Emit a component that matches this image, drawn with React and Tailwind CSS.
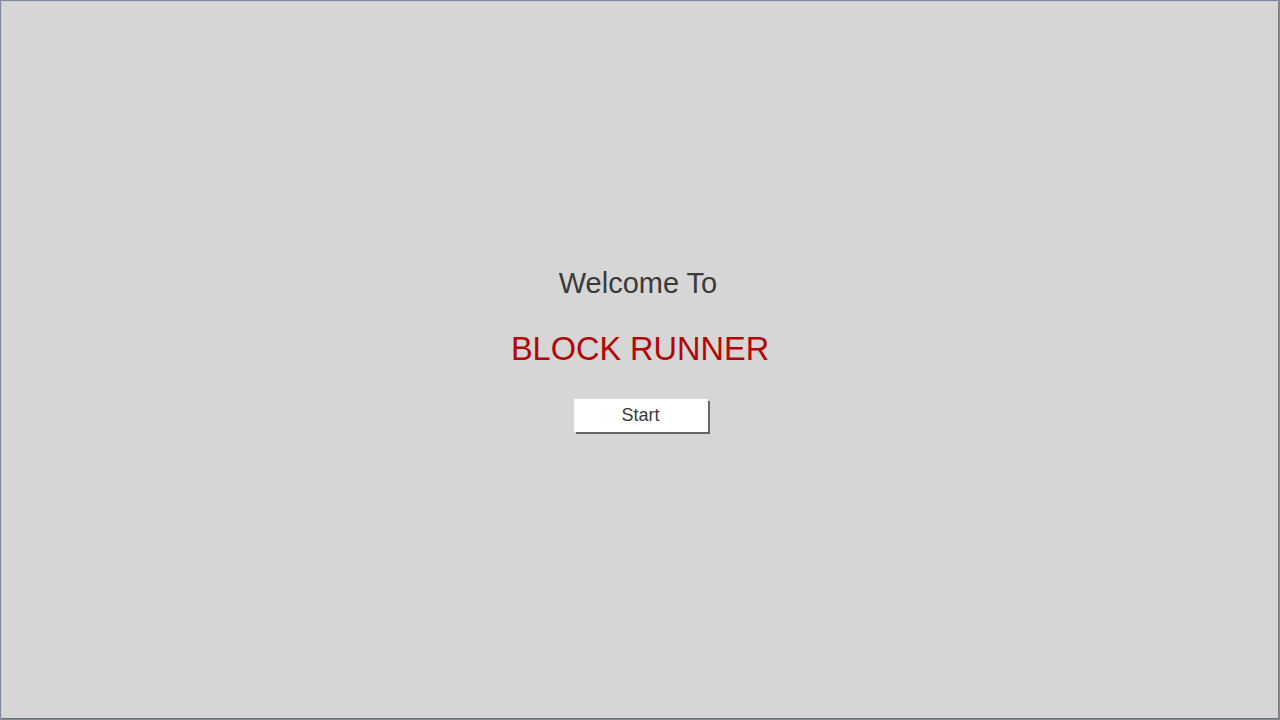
export default function App() {
  return (
    <div className="h-screen w-screen bg-[#7f889c] p-[1px]" style={{ fontFamily: '"Liberation Sans", Arial, sans-serif' }}>
      <div className="h-full w-full border-t border-l border-[#c9ccd3] border-r-[#7a7a7a] border-b-[#6e6e6e] border-r border-b bg-[#d6d6d6]">
        <div className="flex flex-col items-center pt-[267px]">
          <h2 className="mr-[4px] text-[29px] leading-none text-[#3a3a3a]">Welcome To</h2>
          <h1 className="mt-[35px] text-[32.5px] leading-none text-[#b30606]">BLOCK RUNNER</h1>
          <button className="mt-[33px] ml-[1px] h-[33px] w-[134px] bg-white text-[18px] text-[#3a3a3a] shadow-[2px_2px_0_0_#666666]">
            Start
          </button>
        </div>
      </div>
    </div>
  );
}
